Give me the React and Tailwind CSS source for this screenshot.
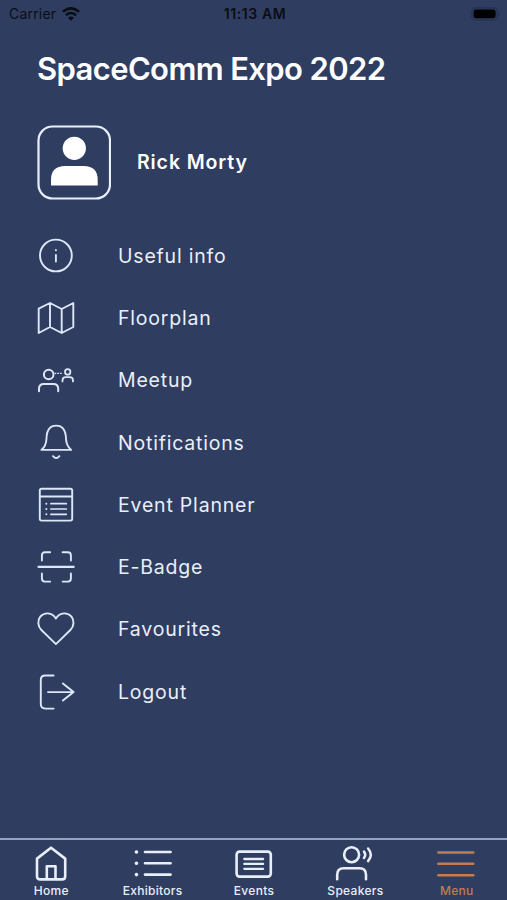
import React from 'react';

const InfoIcon = () => (
  <>
    <circle cx="18.9" cy="18.5" r="15.9" />
    <path d="M18.9 18v6.6" />
    <path d="M18.9 13v.3" />
  </>
);

const MapIcon = () => (
  <path d="M1.7 9.6 13 4l11.7 6 11.6-6v24l-11.6 6L13 28 1.7 34zM13 4v24M24.7 10v24" />
);

const MeetupIcon = () => (
  <>
    <circle cx="11.7" cy="13.5" r="4.8" strokeWidth="2" />
    <path d="M2 30.3v-2.6q0-4.8 4.8-4.8h9.6q4.8 0 4.8 4.8v2.6" strokeWidth="2" />
    <circle cx="30.7" cy="10.9" r="2.7" strokeWidth="1.8" />
    <path d="M25.5 20.4v-1q0-3.3 3.3-3.3h3.9q3.3 0 3.3 3.3v1" strokeWidth="1.8" />
    <path d="M17.6 12.4h8" strokeWidth="1.4" strokeDasharray="1.7 1" strokeLinecap="butt" />
  </>
);

const BellIcon = () => (
  <>
    <path d="M4.4 26.9h29.8c-3.5-2.8-5-5.6-5.2-11.4C28.7 7 25 2.6 19.2 2.6S9.700 7 9.500 15.500C9.300 21.300 7.900 24.100 4.400 26.900z" />
    <path d="M16 33.1q3.2 3.7 6.4 0" />
  </>
);

const PlannerIcon = () => (
  <>
    <rect x="2.8" y="2.8" width="32.4" height="31.8" rx="1.8" />
    <path d="M2.8 10.5h32.4" />
    <path d="M13.9 17.7h15.4M13.9 23h15.4M13.9 28.3h15.4" strokeWidth="1.7" />
    <path d="M9.3 17.7h.1M9.3 23h.1M9.3 28.3h.1" />
  </>
);

const BadgeIcon = () => (
  <>
    <path d="M1.5 18.8h35.2" strokeWidth="2.3" />
    <path d="M4.9 12.5V7.3q0-3 3-3h5.3M25.6 4.3h5.3q3 0 3 3v5.2M4.9 25.4v5.2q0 3 3 3h5.3M25.6 33.6h5.3q3 0 3-3v-5.2" />
  </>
);

const HeartIcon = () => (
  <path d="M18.9 34.1 4.4 20C.6 16.3.4 10.4 3.3 6.7 7 2.2 14.7 1.7 18.9 8.5c4.2-6.8 11.9-6.3 15.6-1.8 2.9 3.7 2.7 9.6-1.1 13.3z" />
);

const LogoutIcon = () => (
  <>
    <path d="M16.6 2.5H8.3q-4.5 0-4.5 4.5v24.1q0 4.5 4.5 4.5h8.3" />
    <path d="M11 19.1h25.5M25.9 10.6 36.6 19.1l-10.7 8.5" />
  </>
);

const menuItems = [
  { label: 'Useful info', icon: InfoIcon },
  { label: 'Floorplan', icon: MapIcon },
  { label: 'Meetup', icon: MeetupIcon },
  { label: 'Notifications', icon: BellIcon },
  { label: 'Event Planner', icon: PlannerIcon },
  { label: 'E-Badge', icon: BadgeIcon },
  { label: 'Favourites', icon: HeartIcon },
  { label: 'Logout', icon: LogoutIcon },
];

const HomeIcon = () => (
  <path d="M6.6 14.6 20.6 3.7l14.2 10.9v17.6q0 3.2-3.2 3.2H9.8q-3.2 0-3.2-3.2zM16.4 35.2V22.3h8.7v12.9" />
);

const ListIcon = () => (
  <>
    <path d="M13.6 8h25.6M13.6 19.2h25.6M13.6 30.6h25.6" />
    <path d="M5 8h.1M5 19.2h.1M5 30.6h.1" strokeWidth="3.6" />
  </>
);

const EventsIcon = () => (
  <>
    <rect x="3.2" y="7.6" width="34.2" height="25" rx="3" />
    <path d="M10.900 15h18.800M10.900 19.900h18.800M10.900 24.800h18.800" strokeWidth="2.3" />
  </>
);

const SpeakersIcon = () => (
  <>
    <circle cx="17.2" cy="10.7" r="7.5" />
    <path d="M2.8 35.2v-4.400q0-6.500 6.500-6.500h15.800q6.500 0 6.500 6.500v4.400" />
    <path d="M29.600 7.600q2.400 3.200 0 6.400M33.700 4.500q5.400 6.300 0 12.600" strokeWidth="2.500" />
  </>
);

const MenuIcon = () => <path d="M3 8.500h34.900M3 19.800h34.900M3 31.300h34.900" />;

const tabs = [
  { label: 'Home', icon: HomeIcon },
  { label: 'Exhibitors', icon: ListIcon },
  { label: 'Events', icon: EventsIcon },
  { label: 'Speakers', icon: SpeakersIcon },
  { label: 'Menu', icon: MenuIcon, active: true },
];

function StatusBar() {
  return (
    <div className="flex h-[27px] items-center justify-between pl-[9px] pr-[6px] text-[#0a0d16]">
      <div className="flex flex-1 items-center gap-[6px]">
        <span className="text-[14px] tracking-[0.2px]">Carrier</span>
        <svg width="18" height="14" viewBox="0 0 18 14" fill="none" stroke="currentColor" strokeWidth="2.5">
          <path d="M.9 4.9q8.1-7 16.2 0M3.9 8.2q5.1-4.3 10.2 0" />
          <path d="M9 13.7 6 10.7q3-2.4 6 0z" fill="currentColor" stroke="none" />
        </svg>
      </div>
      <span className="text-[14px] font-semibold tracking-[0.6px]">11:13 AM</span>
      <div className="flex flex-1 justify-end">
        <svg width="30" height="14" viewBox="0 0 30 14">
          <rect x=".8" y=".8" width="25.6" height="12.2" rx="3.8" fill="none" stroke="#252f50" strokeWidth="1.2" />
          <rect x="2.6" y="2.5" width="22" height="8.8" rx="2.2" fill="#000" />
          <path d="M27.6 4.8q2.2 2.2 0 4.400z" fill="#252f50" />
        </svg>
      </div>
    </div>
  );
}

export default function App() {
  return (
    <div className="flex h-[900px] w-[507px] flex-col overflow-hidden bg-[#2f3d60] font-['Inter','Liberation_Sans',sans-serif] text-white">
      <StatusBar />

      <h1 className="mt-[22px] pl-[37px] text-[31px] font-semibold leading-[40px] tracking-[-0.62px] whitespace-nowrap">
        SpaceComm Expo 2022
      </h1>

      {/* User */}
      <div className="mt-[36px] flex items-center gap-[26px] pl-[37px]">
        <svg width="74" height="75" viewBox="0 0 74 75">
          <rect x="1.5" y="1.5" width="71.5" height="72" rx="14" fill="none" stroke="#e9eff9" strokeWidth="2.2" />
          <circle cx="37.3" cy="23.3" r="11.6" fill="#fff" />
          <path d="M14 60.5v-5.500q0-14 14-14h18.700q14 0 14 14v5.500z" fill="#fff" />
        </svg>
        <span className="text-[19.5px] font-semibold tracking-[0.9px]">Rick Morty</span>
      </div>

      {/* Menu list */}
      <ul className="mt-[24.4px] flex flex-col pl-[37px]">
        {menuItems.map(({ label, icon: Icon }) => (
          <li key={label} className="flex h-[62.3px] items-center gap-[43px]">
            <svg
              width="38"
              height="38"
              viewBox="0 0 38 38"
              fill="none"
              stroke="#dce7f7"
              strokeWidth="1.9"
              strokeLinecap="round"
              strokeLinejoin="round"
            >
              <Icon />
            </svg>
            <span className="pt-[1.4px] text-[19.5px] tracking-[0.8px] text-[#e9eff9]">{label}</span>
          </li>
        ))}
      </ul>

      {/* Bottom tabs */}
      <nav className="mt-auto flex h-[62px] border-t-2 border-[#94a4be]">
        {tabs.map(({ label, icon: Icon, active }) => (
          <div
            key={label}
            className={`flex flex-1 flex-col items-center pt-1 ${active ? 'text-[#c27c50]' : 'text-[#e9eff9]'}`}
          >
            <svg
              width="40"
              height="38"
              viewBox="0.6 0 40 38"
              fill="none"
              stroke="currentColor"
              strokeWidth="2.6"
              strokeLinecap="round"
              strokeLinejoin="round"
              overflow="visible"
            >
              <Icon />
            </svg>
            <span className="pl-[1px] text-[12px] font-medium leading-[18px] tracking-[0.3px]">{label}</span>
          </div>
        ))}
      </nav>
    </div>
  );
}
